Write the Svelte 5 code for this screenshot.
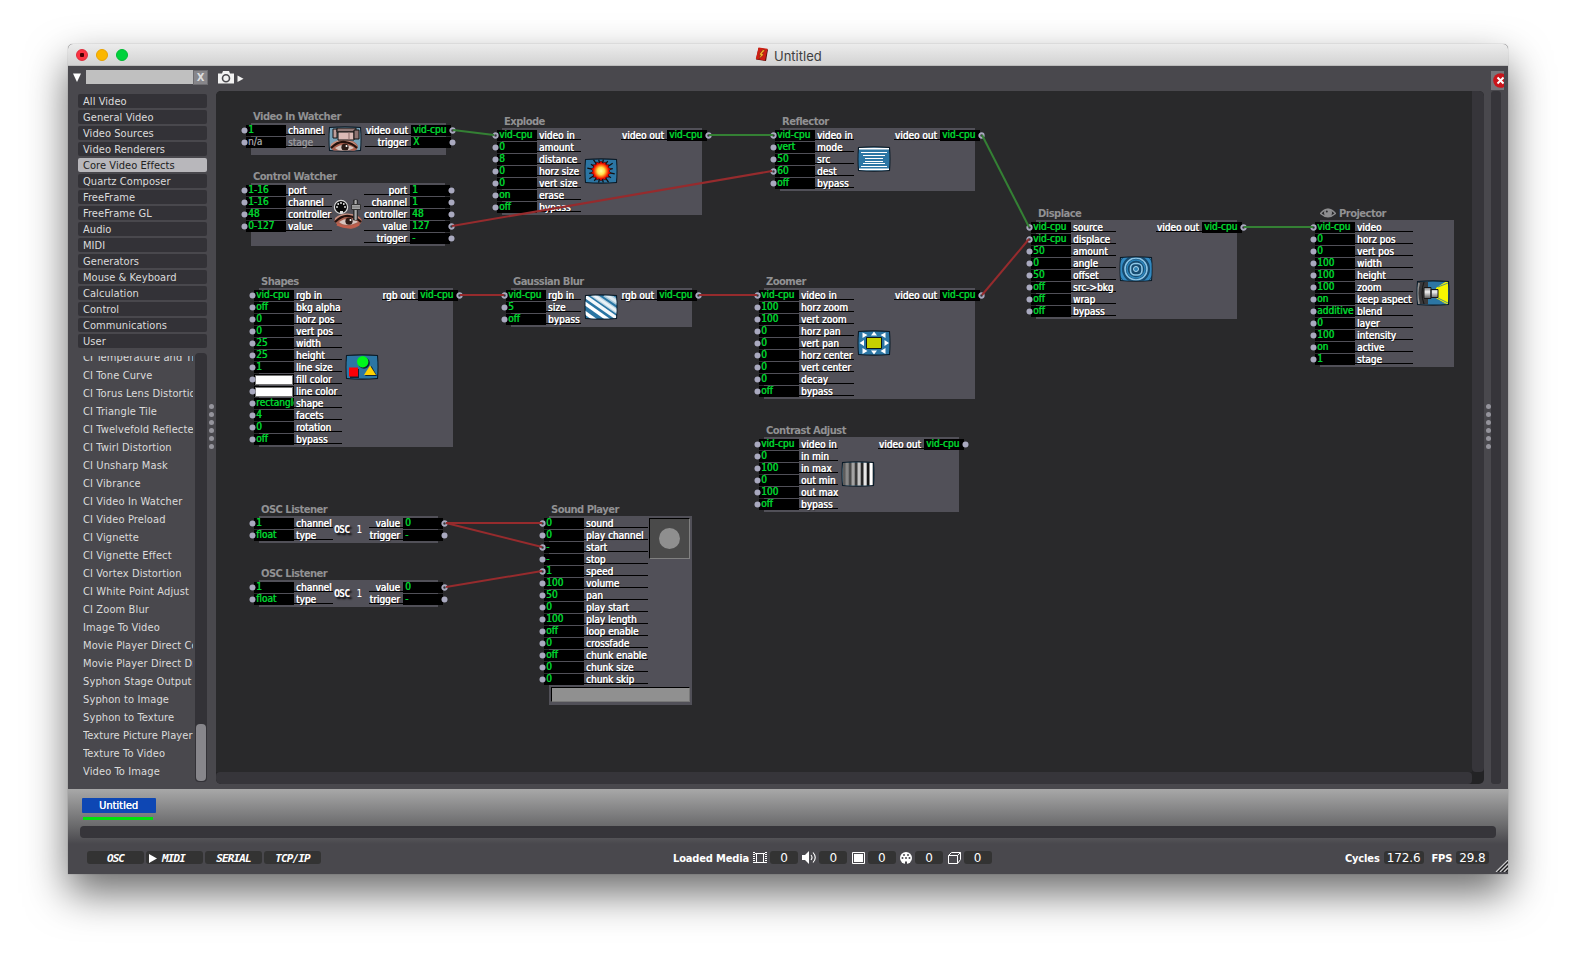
<script>
  const categories = ['All Video', 'General Video', 'Video Sources', 'Video Renderers', 'Core Video Effects', 'Quartz Composer', 'FreeFrame', 'FreeFrame GL', 'Audio', 'MIDI', 'Generators', 'Mouse & Keyboard', 'Calculation', 'Control', 'Communications', 'User'];
  const actors = ['CI Temperature and Tint', 'CI Tone Curve', 'CI Torus Lens Distortion', 'CI Triangle Tile', 'CI Twelvefold Reflected', 'CI Twirl Distortion', 'CI Unsharp Mask', 'CI Vibrance', 'CI Video In Watcher', 'CI Video Preload', 'CI Vignette', 'CI Vignette Effect', 'CI Vortex Distortion', 'CI White Point Adjust', 'CI Zoom Blur', 'Image To Video', 'Movie Player Direct Core', 'Movie Player Direct Draw', 'Syphon Stage Output', 'Syphon to Image', 'Syphon to Texture', 'Texture Picture Player', 'Texture To Video', 'Video To Image'];
  const V = 'vid-cpu';
  const vout = [['video out', V, 1]];

  // Each port is [label, value, connected]
  const nodes = [
    { t: 'Video In Watcher', x: 251, y: 123, w: 195, h: 32, lw: 39, i: [['channel', '1'], ['stage', 'n/a', 0, 1]], ow: 46, o: [['video out', V, 1], ['trigger', 'X']], icon: 'camera', ix: 328, iy: 126 },
    { t: 'Control Watcher', x: 251, y: 183, w: 194, h: 63, lw: 46, i: [['port', '1-16'], ['channel', '1-16'], ['controller', '48'], ['value', '0-127']], ow: 46, o: [['port', '1'], ['channel', '1'], ['controller', '48'], ['value', '127', 1], ['trigger', '-']], icon: 'control', ix: 333, iy: 198 },
    { t: 'Explode', x: 502, y: 128, w: 200, h: 87, lw: 44, i: [['video in', V, 1], ['amount', '0'], ['distance', '8'], ['horz size', '0'], ['vert size', '0'], ['erase', 'on'], ['bypass', 'off']], ow: 46, o: vout, icon: 'explode', ix: 584, iy: 158 },
    { t: 'Reflector', x: 780, y: 128, w: 195, h: 63, lw: 39, i: [['video in', V, 1], ['mode', 'vert'], ['src', '50'], ['dest', '60', 1], ['bypass', 'off']], ow: 46, o: vout, icon: 'reflect', ix: 857, iy: 146 },
    { t: 'Displace', x: 1036, y: 220, w: 201, h: 99, lw: 45, i: [['source', V, 1], ['displace', V, 1], ['amount', '50'], ['angle', '0'], ['offset', '50'], ['src->bkg', 'off'], ['wrap', 'off'], ['bypass', 'off']], ow: 46, o: vout, icon: 'displace', ix: 1119, iy: 256 },
    { t: 'Projector', x: 1320, y: 220, w: 134, h: 147, lw: 58, eye: true, i: [['video', V, 1], ['horz pos', '0'], ['vert pos', '0'], ['width', '100'], ['height', '100'], ['zoom', '100'], ['keep aspect', 'on'], ['blend', 'additive'], ['layer', '0'], ['intensity', '100'], ['active', 'on'], ['stage', '1']], ow: 0, o: [], icon: 'projector', ix: 1416, iy: 280 },
    { t: 'Shapes', x: 259, y: 288, w: 194, h: 159, lw: 48, i: [['rgb in', V], ['bkg alpha', 'off'], ['horz pos', '0'], ['vert pos', '0'], ['width', '25'], ['height', '25'], ['line size', '1'], ['fill color', '#'], ['line color', '#'], ['shape', 'rectangle'], ['facets', '4'], ['rotation', '0'], ['bypass', 'off']], ow: 36, o: [['rgb out', V, 1]], icon: 'shapes', ix: 345, iy: 354 },
    { t: 'Gaussian Blur', x: 511, y: 288, w: 181, h: 39, lw: 35, i: [['rgb in', V, 1], ['size', '5'], ['bypass', 'off']], ow: 36, o: [['rgb out', V, 1]], icon: 'blur', ix: 584, iy: 294 },
    { t: 'Zoomer', x: 764, y: 288, w: 211, h: 111, lw: 55, i: [['video in', V, 1], ['horz zoom', '100'], ['vert zoom', '100'], ['horz pan', '0'], ['vert pan', '0'], ['horz center', '0'], ['vert center', '0'], ['decay', '0'], ['bypass', 'off']], ow: 46, o: vout, icon: 'zoomer', ix: 857, iy: 330 },
    { t: 'Contrast Adjust', x: 764, y: 437, w: 195, h: 75, lw: 39, i: [['video in', V], ['in min', '0'], ['in max', '100'], ['out min', '0'], ['out max', '100'], ['bypass', 'off']], ow: 46, o: [['video out', V]], icon: 'contrast', ix: 841, iy: 461 },
    { t: 'OSC Listener', x: 259, y: 516, w: 179, h: 27, lw: 39, i: [['channel', '1'], ['type', 'float']], ow: 34, o: [['value', '0', 1], ['trigger', '-']], osc: true },
    { t: 'OSC Listener', x: 259, y: 580, w: 179, h: 27, lw: 39, i: [['channel', '1'], ['type', 'float']], ow: 34, o: [['value', '0', 1], ['trigger', '-']], osc: true },
    { t: 'Sound Player', x: 549, y: 516, w: 143, h: 189, lw: 64, i: [['sound', '0', 1], ['play channel', '0'], ['start', '-', 1], ['stop', '-'], ['speed', '1', 1], ['volume', '100'], ['pan', '50'], ['play start', '0'], ['play length', '100'], ['loop enable', 'off'], ['crossfade', '0'], ['chunk enable', 'off'], ['chunk size', '0'], ['chunk skip', '0']], ow: 0, o: [], player: true }
  ];
  const green = [[453, 130, 494, 135], [709, 135, 773, 135], [982, 135, 1029, 227], [1244, 227, 1313, 227]];
  const red = [[452, 226, 772, 171], [460, 295, 504, 295], [699, 295, 757, 295], [982, 295, 1029, 239], [446, 523, 542, 523], [446, 523, 542, 547], [446, 587, 542, 571]];
  const path = (l) => 'M' + l.join(' ');
  const rays = Array.from({ length: 16 }, (_, k) => {
    const a = (k * Math.PI) / 8 + 0.2;
    const r = k % 2 ? 12 : 14;
    return [17 + Math.cos(a) * r, 13 + Math.sin(a) * r];
  });
  const burst = Array.from({ length: 28 }, (_, k) => {
    const a = (k * Math.PI) / 14;
    const r = k % 2 ? 10 : 8;
    return `${17 + Math.cos(a) * r},${13 + Math.sin(a) * r}`;
  }).join(' ');
</script>

{#snippet socket(on)}
  <svg class="port" width="7" height="7" viewBox="0 0 7 7">
    {#if on}<circle cx="3.5" cy="3.5" r="2.2" fill="#36363a" stroke="#a9a9bf" stroke-width="1.9" />
    {:else}<circle cx="3.5" cy="3.5" r="3" fill="#a9a9bf" />{/if}
  </svg>
{/snippet}

{#snippet lens(y)}
  <g transform="translate(0 {y})">
    <path d="M2 7Q9 0 18 1q9 0 12 6-1 7-11 9Q5 15 2 7z" fill="#a9604f" />
    <path d="M3 5Q10-1 20 1q7 2 9 6-8-5-14-4T3 8z" fill="#c58e7f" />
    <path d="M7 9q6-4 11-3 6 1 8 3-6 3-10 3-6 0-9-3z" fill="#d6c4be" />
    <circle cx="17" cy="8.200" r="3.600" fill="#2b1b17" /><circle cx="18.500" cy="7" r="1" fill="#fff" />
    <path d="M3 9Q10 2 17 3t12 6" fill="none" stroke="#24110d" stroke-width="2.200" />
    <path d="M5 11.500q11 5 22 0" fill="none" stroke="#c25e4c" stroke-width="2.200" />
  </g>
{/snippet}

{#snippet glyph(kind)}
  {#if kind === 'control'}
    <svg width="34" height="32" viewBox="0 0 34 32">
      <g transform="translate(-1 15)">{@render lens(0)}</g>
      <circle cx="8" cy="9" r="6.6" fill="#0a0a0a" stroke="#d8d8d8" stroke-width="1.2" />
      <g fill="#eee"><circle cx="4" cy="9" r=".9" /><circle cx="5.2" cy="6" r=".9" /><circle cx="8" cy="5" r=".9" /><circle cx="10.8" cy="6" r=".9" /><circle cx="12" cy="9" r=".9" /></g>
      <path d="M7 13h3v2H7z" fill="#ddd" />
      <path d="M20.5 2h4v20h-4z" fill="#6b6b6b" stroke="#222" stroke-width=".8" /><path d="M22 2h1.5v20H22z" fill="#aaa" />
      <path d="M18.500 6.500h9v5h-9z" fill="#a2a2a2" stroke="#333" /><path d="M19 9h8" stroke="#777" />
    </svg>
  {:else}
    <svg width="34" height="26" viewBox="0 0 34 26">
      <defs>
        <radialGradient id="fire"><stop offset="0" stop-color="#ffff9c" /><stop offset=".45" stop-color="#ffe050" /><stop offset=".75" stop-color="#ff6a10" /><stop offset="1" stop-color="#f00a00" /></radialGradient>
        <linearGradient id="metal" x2="0" y2="1"><stop offset="0" stop-color="#777" /><stop offset=".4" stop-color="#f2f2f2" /><stop offset="1" stop-color="#555" /></linearGradient>
        <linearGradient id="mid" x2="1" y2="0"><stop offset="0" stop-color="#666" /><stop offset="1" stop-color="#000" /></linearGradient>
        <clipPath id="tile"><path d="M2 2Q17 .8 32 2Q33 13 32 24Q17 25.200 2 24Q1 13 2 2z" /></clipPath>
      </defs>
      <path d="M1 1Q17-.5 33 1Q34 13 33 25Q17 26.500 1 25Q0 13 1 1z" fill="#0b1a26" />
      <g clip-path="url(#tile)">
        <rect width="34" height="26" fill={kind === 'camera' ? '#78a2b9' : '#2c76a4'} />
        {#if kind === 'camera'}
          {@render lens(13)}
          <path d="M5 3h4v9H5z" fill="#be9d9a" stroke="#111" /><path d="M9 2h19v4H9z" fill="#8f7775" stroke="#111" />
          <path d="M10 6h16v8H10z" fill="#dbbab6" stroke="#111" /><path d="M26 4h5v9h-5z" fill="#8d7371" stroke="#111" /><path d="M21 6v8" stroke="#8a6d6a" />
        {:else if kind === 'explode'}
          {#each rays as r}<path d="M17 13L{r[0]} {r[1]}" stroke="#101010" stroke-width="1.300" />{/each}
          <polygon points={burst} fill="#f00a00" stroke="#420000" stroke-width=".6" /><circle cx="17" cy="13" r="7.800" fill="url(#fire)" />
        {:else if kind === 'reflect'}
          <path d="M2 2.500h30M2 23.500h30" stroke="#fff" stroke-width="2" />
          <path d="M4 6.500h26M6 9.500h22M8 12.500h18M8 15.500h18M6 17.500h22M4 20.500h26" stroke="#fff" stroke-width="1.200" />
        {:else if kind === 'shapes'}
          <path d="M5 15h9v9H5z" fill="#123" /><circle cx="19" cy="9" r="5.800" fill="#123" /><path d="M20 22l6.500-10L32 22z" fill="#123" />
          <path d="M4 13.500h9v9H4z" fill="#fb0007" /><circle cx="17.700" cy="7.800" r="5.700" fill="#00f51c" /><path d="M19 21l6-9.500 6 9.500z" fill="#ffd200" />
        {:else if kind === 'blur'}
          <g stroke="#fff"><path d="M-8 3L26 27" stroke-width="3.500" /><path d="M-2 0L34 25" stroke-width="3.500" opacity=".95" /><path d="M8 0L40 22" stroke-width="5" opacity=".7" /><path d="M8 0L40 22" stroke-width="2.500" opacity=".7" /><path d="M21 0L48 18" stroke-width="6" opacity=".6" /><path d="M21 0L48 18" stroke-width="3" opacity=".6" /><path d="M-8 12L14 28" stroke-width="3.500" /></g>
        {:else if kind === 'zoomer'}
          <path d="M9.500 7.500h15v11h-15z" fill="#c5cf00" stroke="#0a1518" />
          <path d="M17 1.500l3 4h-6zM17 24.500l3-4h-6zM2.500 13l4.500-3v6zM32 13l-4.500-3v6zM5.500 2.500l5 2.500-5 3zM28.500 2.500l-5 2.500 5 3zM5.500 18l5 3-5 3zM28.500 18l-5 3 5 3z" fill="#fff" />
        {:else if kind === 'displace'}
          <rect width="34" height="26" fill="#174b70" />
          <g fill="none"><circle cx="17" cy="13" r="19" stroke="#79b8dc" stroke-width="2" /><circle cx="17" cy="13" r="15.500" stroke="#3389c0" stroke-width="3" /><circle cx="17" cy="13" r="11" stroke="#8bc4e6" stroke-width="1.600" /><circle cx="17" cy="13" r="9" stroke="#2b83b9" stroke-width="1.500" /><rect x="11.500" y="7.500" width="11.500" height="11.500" rx="4.500" stroke="#8fc8e8" stroke-width="1.600" /><circle cx="17" cy="13" r="2.500" stroke="#b0d8ee" fill="#2d7fb2" /></g>
        {:else if kind === 'contrast'}
          <rect width="34" height="26" fill="url(#mid)" />
          {#each ['#888', '#a3a3a3', '#c4c4c4', '#e6e6e6', '#fff'] as c, k}<rect x={4.500 + k * 6} width="3.200" height="26" fill={c} />{/each}
        {:else if kind === 'projector'}
          <path d="M20 8L32 0v26l-12-8z" fill="#f7f500" /><path d="M22 5l10-5M22 7l10-4M22 20l10 5M22 18l10 5" stroke="#2c76a4" stroke-width=".8" />
          <path d="M0 0h12v26H0z" fill="#39393b" /><path d="M3 3Q0 13 3 24" fill="none" stroke="#909090" stroke-width="2" /><path d="M8 2Q4 13 8 24" fill="none" stroke="#151515" />
          <path d="M8 7.500h7v11H8zM15 9.500h7v8h-7z" fill="url(#metal)" stroke="#181818" />
        {/if}
      </g>
    </svg>
  {/if}
{/snippet}

<div class="page">
  <div class="window">
    <header>
      <div class="lights"><i class="r"></i><i class="y"></i><i class="g"></i></div>
      <div class="title">
        <svg width="14" height="15" viewBox="0 0 14 15"><path d="M3.500 1L13 2.500 11 14 1 12.500z" fill="#5a0f0a" /><path d="M3.500 .5L12.500 1.800 10 13.500 .8 12z" fill="#cf1f14" /><path d="M8 2.500l2 1-3 3 2 1-5 4.500 1.500-4-1.500-.5z" fill="#f6b32a" stroke="#6b1608" stroke-width=".5" /></svg>
        <span>Untitled</span>
      </div>
    </header>

    <main>
      <aside>
        <div class="search">
          <svg width="8" height="9" viewBox="0 0 8 9"><path d="M0 .5h8L4 9z" fill="#fff" /></svg>
          <div class="field"></div><div class="clear">X</div>
        </div>
        <ul class="cats">
          {#each categories as c}<li class:sel={c === 'Core Video Effects'}>{c}</li>{/each}
        </ul>
        <div class="browser">
          <ul class="actors">{#each actors as a}<li>{a}</li>{/each}</ul>
          <div class="track"><div class="thumb"></div></div>
        </div>
      </aside>
      <div class="grip">{#each Array(6) as _}<b></b>{/each}</div>

      <section>
        <div class="tools">
          <svg width="27" height="14" viewBox="0 0 27 14"><path d="M0 2.500h4l1-2.500h6L12 2.500h4v10H0z" fill="#f2f2f2" /><circle cx="8" cy="7.200" r="3.500" fill="none" stroke="#4a494e" stroke-width="1.600" /><path d="M19.500 4.500l6 3.200-6 3.200z" fill="#f2f2f2" /></svg>
        </div>
        <div class="stage">
          <div class="canvas">
            {#each nodes as n}
              <article style:left="{n.x - 216}px" style:top="{n.y - 91}px" style:width="{n.w}px" style:height="{n.h}px">
                <h3>
                  {#if n.eye}<svg width="16" height="10" viewBox="0 0 16 10"><path d="M.5 5.500Q8-3 15.500 5.500Q8 12 .5 5.500z" fill="none" stroke="#8d8d8f" stroke-width="1.400" /><circle cx="8" cy="4.800" r="4" fill="#8d8d8f" /><circle cx="6.800" cy="3.500" r="1" fill="#29292b" /></svg>{/if}{n.t}
                </h3>
                <div class="ins">
                  {#each n.i as p}
                    <div class="row" class:dim={p[3]}>
                      {@render socket(p[2])}
                      <div class="val">{#if p[1] === '#'}<div class="swatch"></div>{:else}{p[1]}{/if}</div>
                      <div class="lab" style:width="{n.lw}px">{p[0]}</div>
                    </div>
                  {/each}
                </div>
                <div class="outs">
                  {#each n.o as p}
                    <div class="row">
                      <div class="lab" style:width="{n.ow}px">{p[0]}</div>
                      <div class="val">{p[1]}</div>
                      {@render socket(p[2])}
                    </div>
                  {/each}
                </div>
                {#if n.icon}<div class="icon" style:left="{n.ix - n.x}px" style:top="{n.iy - n.y}px">{@render glyph(n.icon)}</div>{/if}
                {#if n.osc}<div class="osc"><em>OSC</em><span>1</span></div>{/if}
                {#if n.player}<div class="pad"><i></i></div><div class="meter"></div>{/if}
              </article>
            {/each}
            <svg class="wires" width="1256" height="681" viewBox="216 91 1256 681" fill="none" stroke-width="2">
              {#each green as l}<path d={path(l)} stroke="#348034" />{/each}
              {#each red as l}<path d={path(l)} stroke="#962b2d" />{/each}
            </svg>
          </div>
          <div class="vbar"></div>
          <div class="hbar"></div>
          <div class="corner"></div>
        </div>
      </section>

      <div class="right">
        <div class="close"><svg width="15" height="19" viewBox="0 0 15 19"><circle cx="9.500" cy="9.500" r="7.300" fill="#c9151b" /><path d="M6.500 6.500l6 6M12.500 6.500l-6 6" stroke="#fff" stroke-width="2" /></svg></div>
        <div class="dots">{#each Array(6) as _}<b></b>{/each}</div>
        <div class="strip"></div>
      </div>
    </main>

    <footer>
      <div class="tab">Untitled</div>
      <div class="line"></div>
      <div class="bar"></div>
      <div class="status">
        <div class="proto">
          <em>OSC</em><em><svg width="8" height="9" viewBox="0 0 8 9"><path d="M0 0l8 4.500L0 9z" fill="#fff" /></svg>MIDI</em><em>SERIAL</em><em>TCP/IP</em>
        </div>
        <div class="media">
          <strong>Loaded Media</strong>
          <svg width="14" height="12" viewBox="0 0 14 12"><path d="M3.500 1.500h7v9h-7z" fill="none" stroke="#fff" /><path d="M1 0v12M13 0v12" stroke="#fff" stroke-width="2" stroke-dasharray="1 1" /><path d="M2 1.500h10M2 10.500h10" stroke="#fff" /></svg><span>0</span>
          <svg width="14" height="13" viewBox="0 0 14 13"><path d="M0 4h3l4-4v13L3 9H0z" fill="#fff" /><path d="M9 4q2 2.500 0 5M11 1.500q4.500 5 0 10" fill="none" stroke="#fff" stroke-width="1.100" /></svg><span>0</span>
          <svg width="13" height="12" viewBox="0 0 13 12"><path d="M.5.5h12v11H.5z" fill="none" stroke="#fff" /><path d="M2 2h9v8H2z" fill="#fff" /></svg><span>0</span>
          <svg width="12" height="12" viewBox="0 0 12 12"><circle cx="6" cy="6" r="6" fill="#fff" /><g fill="#48474c"><circle cx="2.500" cy="6" r="1" /><circle cx="4" cy="3" r="1" /><circle cx="8" cy="3" r="1" /><circle cx="9.500" cy="6" r="1" /><circle cx="6" cy="6" r="1" /><path d="M5 9.500h2V12H5z" /></g></svg><span>0</span>
          <svg width="13" height="12" viewBox="0 0 13 12"><path d="M.5 3.500h9v8h-9zM.5 3.500l3-3h9v7l-3 4M9.500 3.500l3-3" fill="none" stroke="#fff" /></svg><span>0</span>
        </div>
        <div class="perf"><strong>Cycles</strong><span>172.6</span><strong>FPS</strong><span>29.8</span></div>
        <svg class="resize" width="13" height="12" viewBox="0 0 13 12"><path d="M1 12L13 0M5 12l8-8M9 12l4-4" stroke="#d0d0d0" stroke-width="1.100" /><path d="M3 12L13 2M7 12l6-6M11 12l2-2" stroke="#1c1c1c" /></svg>
      </div>
    </footer>
  </div>
</div>

<style>
  :global(body) { margin: 0; background: #fff; }
  * { box-sizing: border-box; }
  ul { list-style: none; margin: 0; padding: 0; }
  svg { display: block; flex: none; }
  .page { width: 1576px; height: 966px; padding: 44px 68px 0; overflow: hidden; font-family: "DejaVu Sans Condensed", "DejaVu Sans", sans-serif; font-stretch: condensed; background: #fff; }
  .window { width: 1440px; height: 830px; display: flex; flex-direction: column; background: #49484d; border-radius: 5px 5px 0 0; box-shadow: 0 0 1px rgba(0,0,0,.5), 0 19px 42px rgba(0,0,0,.58); }
  header { height: 22px; flex: none; display: flex; align-items: center; background: linear-gradient(#ececec, #d3d3d3); border-radius: 5px 5px 0 0; border-bottom: 1px solid #bcbcbc; }
  .lights { display: flex; gap: 8px; padding-left: 8px; }
  .lights i { width: 12px; height: 12px; border-radius: 50%; background: #fbb700; border: 1px solid #e9a300; }
  .lights .r { background: radial-gradient(#4a0003 0 2px, #fb3443 2.500px); border-color: #df2938; }
  .lights .g { background: #00d23c; border-color: #00bb34; }
  .title { display: flex; gap: 5px; margin-left: 627px; align-items: center; font: 13px/20px Inter, "Liberation Sans", sans-serif; color: #404040; }
  .title span { letter-spacing: 0; padding-top: 2px; }
  main { height: 723px; flex: none; display: flex; }
  aside { width: 140px; padding: 4px 0 0 5px; display: flex; flex-direction: column; }
  .search { height: 24px; display: flex; }
  .search svg { margin: 3px 5px 0 0; }
  .field { width: 107px; height: 14px; background: #c0c0c0; }
  .clear { width: 15px; height: 15px; background: #87868a; border: 1px solid #6d6c70; color: #ddd; font-size: 11px; line-height: 13px; font-weight: bold; text-align: center; }
  .cats { margin-left: 5px; width: 129px; height: 259px; display: flex; flex-direction: column; gap: 2px; }
  .cats li { height: 14px; flex: none; background: #333237; border-radius: 2px; padding-left: 5px; color: #dcdcdc; font-size: 11px; line-height: 16px; letter-spacing: .06px; }
  .cats .sel { background: #b8b7bb; color: #222; }
  .browser { margin-left: 5px; display: flex; justify-content: space-between; width: 129px; height: 429px; }
  .actors { width: 115px; height: 426px; margin-top: 3px; padding-left: 5px; display: flex; flex-direction: column; justify-content: flex-end; overflow: hidden; }
  .actors li { height: 18px; flex: none; color: #dcdcdc; font-size: 11px; line-height: 18px; letter-spacing: .12px; white-space: nowrap; overflow: hidden; transform: translateY(-1px); }
  .track { width: 12px; background: #333237; border-radius: 4px; padding: 0 1px 1px; display: flex; align-items: flex-end; }
  .thumb { width: 10px; height: 57px; border-radius: 4px; background: #87868b; }
  .grip, .dots { display: flex; flex-direction: column; gap: 3px; }
  .grip { width: 8px; padding: 338px 0 0 1px; }
  .grip b, .dots b { width: 5px; height: 5px; border-radius: 50%; background: #95949c; }
  section { width: 1268px; display: flex; flex-direction: column; }
  .tools { height: 25px; padding: 5px 0 0 2px; }
  .stage { display: grid; grid-template: 681px 12px / 1256px 12px; border-radius: 5px; overflow: hidden; background: #232325; }
  .canvas { position: relative; background: #29292b; overflow: hidden; }
  .vbar, .hbar { background: #36353a; }
  .hbar { border-radius: 4px; }
  .vbar { border-radius: 0 0 4px 4px; }
  .wires { position: absolute; inset: 0; z-index: 3; }
  article { position: absolute; background: #515058; font-size: 10px; }
  h3 { position: absolute; left: 2px; top: -12px; margin: 0; height: 12px; display: flex; gap: 3px; align-items: center; font: bold 10px/12px "DejaVu Sans", sans-serif; letter-spacing: -.55px; color: #919193; white-space: nowrap; }
  h3 svg { margin: -2px 0 0 -2px; }
  .ins { position: absolute; left: -11px; top: 2px; }
  .outs { position: absolute; right: -11px; top: 2px; }
  .row { height: 12px; display: flex; align-items: flex-start; }
  .port { margin: 1.500px -1px 0 0; position: relative; left: .6px; z-index: 2; }
  .outs .port { margin: 1.500px 0 0 -1px; left: -.6px; }
  .val { width: 40px; height: 11px; background: #000; color: #00d32f; padding-left: 2px; line-height: 9px; overflow: hidden; white-space: nowrap; text-shadow: .5px 0 #00d32f; }
  .swatch { width: 38px; height: 10px; margin: .5px 0 0 -1px; background: #fff; border: 1px solid #777; }
  .lab { height: 10px; border-bottom: 1px solid #000; padding-left: 2px; line-height: 11px; color: #fff; white-space: nowrap; text-shadow: .3px 0 #fff, 1px 1px 1px rgba(0,0,0,.5); }
  .outs .lab { padding: 0 3px 0 0; display: flex; justify-content: flex-end; }
  .dim .lab, .dim .val { color: #97969a; text-shadow: .3px 0 #97969a; }
  .icon { position: absolute; }
  .osc { position: absolute; left: 75px; top: 8px; display: flex; gap: 7px; align-items: center; color: #fff; line-height: 12px; }
  .osc em { font: bold 10px/12px "DejaVu Sans Mono", monospace; letter-spacing: -.9px; text-shadow: 2px 2px 2px #000; }
  .pad { position: absolute; left: 100px; top: 2px; width: 41px; height: 41px; background: #4a4a4a; border: 1px solid #000; border-right-color: #808080; border-bottom-color: #808080; display: grid; place-items: center; }
  .pad i { width: 21px; height: 21px; border-radius: 50%; background: #8f8f8f; }
  .meter { position: absolute; left: 2px; top: 171px; width: 139px; height: 15px; background: #909090; border: 1px solid #000; border-right-color: #777; border-bottom-color: #777; }
  .right { width: 24px; padding: 5px 0 0 1px; display: grid; grid-template: 20px 700px / 6px 10px; }
  .close { grid-column: 2; width: 13px; height: 19px; background: #77767b; overflow: hidden; }
  .dots { padding-top: 313px; margin-left: 1px; }
  .strip { background: #36353a; height: 693px; width: 10px; border-radius: 3px; }
  footer { height: 85px; flex: none; display: flex; flex-direction: column; background: linear-gradient(#a8a8a8, #68686a 38px, #49484d 55px); }
  .tab { width: 74px; height: 15px; margin: 9px 0 0 14px; padding-right: 1px; border-radius: 1px; background: #0e47b4; color: #fff; font-size: 11px; line-height: 15px; text-align: center; text-shadow: .3px 0 #fff; }
  .line { width: 70px; height: 3px; margin: 4px 0 6px 15px; background: #00e20c; }
  .bar { width: 1416px; height: 12px; margin-left: 12px; border-radius: 4px; background: #36353a; }
  .status { height: 36px; display: flex; padding: 13px 0 0 19px; color: #fff; position: relative; }
  .proto { display: flex; gap: 2px; width: 586px; }
  .proto em { width: 57px; height: 13px; border-radius: 3px; background: #333; display: flex; justify-content: center; align-items: center; gap: 5px; padding-top: 1px; font: italic bold 11px/15px "DejaVu Sans Mono", monospace; letter-spacing: -.9px; }
  .proto em:nth-child(2) { padding-right: 15px; }
  .media, .perf { display: flex; height: 13px; align-items: center; font: 12px "DejaVu Sans", sans-serif; }
  strong { font: bold 11px/15px "DejaVu Sans Condensed", "DejaVu Sans", sans-serif; font-stretch: condensed; letter-spacing: -.15px; white-space: nowrap; padding-top: 2px; }
  .media strong { width: 80px; }
  .media span { width: 28px; height: 13px; border-radius: 3px; background: #333; line-height: 15px; text-align: center; margin: 0 4.400px 0 3px; }
  .perf { margin-left: 349px; width: 150px; }
  .perf span { height: 13px; line-height: 15px; border-radius: 3px; background: #333; padding: 0 3px; margin: 0 8px 0 4px; letter-spacing: -.1px; }
  .resize { position: absolute; right: 0; bottom: 2px; }
</style>
